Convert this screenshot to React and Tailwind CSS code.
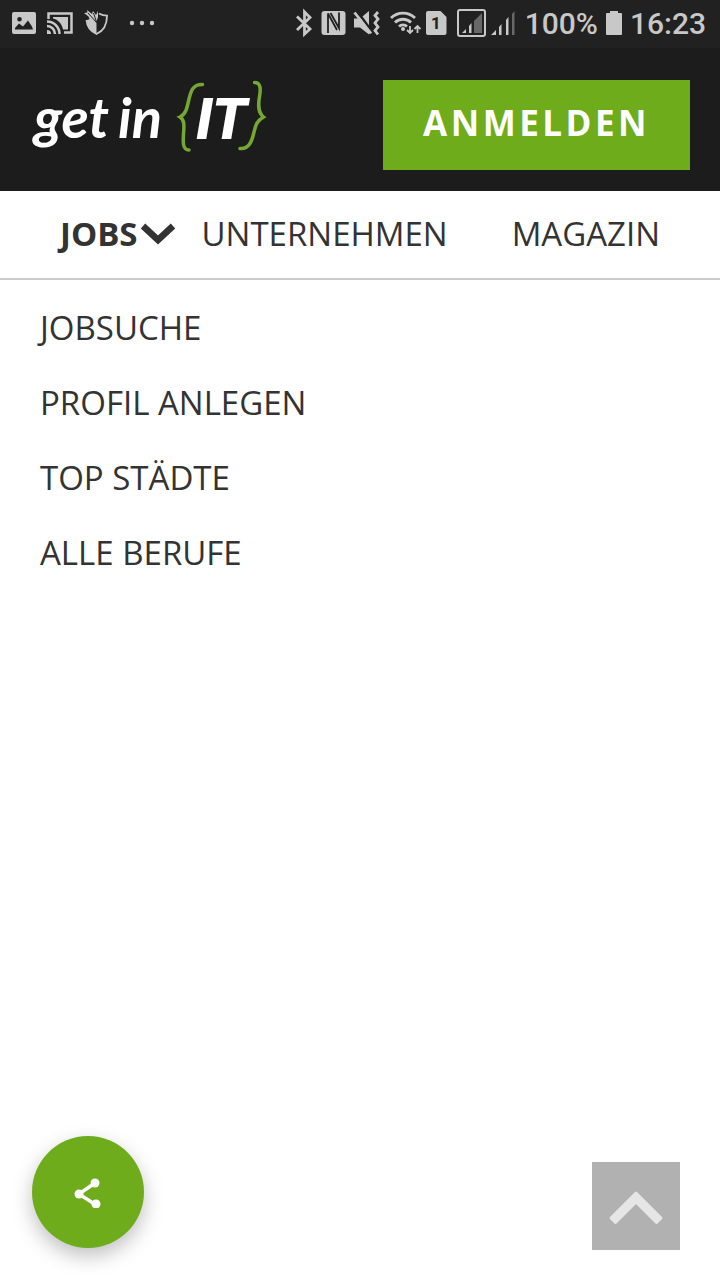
import { useState } from "react";

const navItems = [
  { label: "JOBS", hasMenu: true },
  { label: "UNTERNEHMEN" },
  { label: "MAGAZIN" },
];

const jobLinks = ["JOBSUCHE", "PROFIL ANLEGEN", "TOP STÄDTE", "ALLE BERUFE"];

function StatusBar() {
  return (
    <div className="flex h-12 items-center justify-between bg-[#212121] pr-[14px] pl-3 text-[#c8c8c8]">
      <div className="flex items-center gap-[10px]">
        {/* Picture */}
        <svg width="24" height="48" viewBox="0 0 24 48" fill="currentColor">
          <path fillRule="evenodd" d="M2 12h20a2 2 0 0 1 2 2v18a2 2 0 0 1-2 2H2a2 2 0 0 1-2-2V14a2 2 0 0 1 2-2ZM3 29.500h18l-1-3-4-6-5 6-4-3-4 4.500ZM7.500 17a2.300 2.300 0 1 0 0 4.600 2.300 2.300 0 0 0 0-4.600Z" />
        </svg>
        {/* Cast */}
        <svg width="28" height="48" viewBox="0 0 28 48" fill="none" stroke="currentColor" strokeWidth="2.500">
          <path d="M2.500 19v-5.500h23v19H18" />
          <path d="M7 17h15v12.500h-5C16 24 12 19.500 7 18.500Z" fill="currentColor" stroke="none" />
          <path d="M1 21.500A12.500 12.500 0 0 1 13.500 34M1 26A8 8 0 0 1 9 34" />
          <path d="M1 30a4 4 0 0 1 4 4H1Z" fill="currentColor" stroke="none" />
        </svg>
        {/* Shield */}
        <svg width="26" height="48" viewBox="0 0 26 48" fill="none" stroke="currentColor" strokeWidth="1.800">
          <path d="M15 13.500c3 1.800 5 2.200 8 2.200 0 9-3 15-10.500 18.300C6 31 3 27 2.500 20" />
          <path d="M12.500 23v11C6.500 31 3.500 27 3 20l3-1 6.500 4Z" fill="currentColor" stroke="none" />
          <path d="M0 13l3.500-.5L3 10l5 4 1-3 3 4 2-4v6l-2 6-6-3-1.500-3.500Z" fill="currentColor" stroke="none" />
          <path d="M4 13l8.500 9.500M9.500 13l3 9" stroke="#212121" strokeWidth="1" />
        </svg>
        <svg width="36" height="48" viewBox="0 0 36 48" fill="currentColor">
          <circle cx="12" cy="23" r="2.200" />
          <circle cx="22" cy="23" r="2.200" />
          <circle cx="32" cy="23" r="2.200" />
        </svg>
      </div>

      <div className="flex items-center gap-1 font-[Roboto,sans-serif] text-[30px] leading-none font-medium">
        {/* Bluetooth */}
        <svg width="24" height="48" viewBox="0 0 24 48" fill="none" stroke="currentColor" strokeWidth="2.800">
          <path d="M4 16.500 17 29l-5.500 5V12l5.500 5.500L4 30" />
        </svg>
        {/* NFC */}
        <svg width="28" height="48" viewBox="0 0 28 48">
          <rect x="0.500" y="11" width="24" height="24" rx="3" fill="currentColor" />
          <path d="M7 33V13.500L16 30M9.500 13 18 28V12.500" fill="none" stroke="#212121" strokeWidth="1.800" />
        </svg>
        {/* Muted speaker with vibration */}
        <svg width="32" height="48" viewBox="0 0 32 48" fill="none">
          <path d="M1 18.500h6l9-7.500v23.500L7 27.500H1Z" fill="currentColor" />
          <path d="M4 11 20 33" stroke="#212121" strokeWidth="2.500" />
          <path d="m1.500 12.500 16.500 21" stroke="currentColor" strokeWidth="2.800" />
          <path d="m25 12-3 3.500 3 3.500-3 4 3 4-3 3.500 3 4" stroke="currentColor" strokeWidth="2.800" />
        </svg>
        {/* Wifi */}
        <svg width="32" height="48" viewBox="0 0 32 48" fill="none" stroke="currentColor" strokeWidth="2.800">
          <path d="M2 18a17 17 0 0 1 24 0M6 22.500a11.500 11.500 0 0 1 16 0M10 26.500a6 6 0 0 1 8 0" />
          <circle cx="14" cy="29" r="2" fill="currentColor" stroke="none" />
          <path d="M21 26v7m-3-3 3 3 3-3M28.500 33v-7m-3 3 3-3 3 3" strokeWidth="1.800" />
        </svg>
        {/* SIM 1 */}
        <svg width="28" height="48" viewBox="0 0 28 48">
          <path d="M3 11h12.500l6 6v16a2 2 0 0 1-2 2H3a2 2 0 0 1-2-2V13a2 2 0 0 1 2-2Z" fill="currentColor" />
          <text x="11" y="29" textAnchor="middle" fontSize="17" fontWeight="700" fill="#212121">1</text>
        </svg>
        {/* Signal, both cards */}
        <svg width="30" height="48" viewBox="0 0 30 48">
          <rect x="1" y="10" width="27" height="26" rx="2" fill="none" stroke="currentColor" strokeWidth="2" />
          <path d="M5 33 9 29v4ZM12 26l2.500-3v10H12Z" fill="currentColor" />
          <path d="m17 21 8-8v20h-8Z" fill="#686868" />
        </svg>
        <svg width="30" height="48" viewBox="0 0 30 48" fill="currentColor">
          <path d="m0 35 5-5v5ZM8 27l2.500-3v11H8ZM15 20l2.500-3v18H15Z" />
          <path d="m21 14 2.500-3v24H21Z" fill="#686868" />
        </svg>
        <span>100%</span>
        <svg width="24" height="48" viewBox="0 0 24 48" fill="currentColor">
          <path d="M8 11h8v2h3a1 1 0 0 1 1 1v20a1 1 0 0 1-1 1H5a1 1 0 0 1-1-1V14a1 1 0 0 1 1-1h3Z" />
        </svg>
        <span>16:23</span>
      </div>
    </div>
  );
}

function Logo() {
  return (
    <svg width="240" height="96" viewBox="0 0 240 96" role="img" aria-label="get in {IT}">
      <g fill="#fff" fontStyle="italic">
        <text x="4" y="58" fontFamily="Lato" fontSize="56" fontWeight="700">get</text>
        <text x="88" y="58" fontFamily="Lato" fontSize="56" fontWeight="700">in</text>
        <text x="166" y="59" fontFamily="Roboto" fontSize="57" fontWeight="900">IT</text>
      </g>
      {/* Swung braces */}
      <g fill="none" stroke="#74a832" strokeWidth="3.500" strokeLinecap="round">
        <path d="M172.500 4.500C163 4 161 11 159 19c-2 9-3 15-9 18 5 3 4 10 3.500 17-.5 8-1 16 5.500 16" />
        <path d="M224.500 2.500c6 0 6.500 6 5 14-1.500 9-1.500 16 4 20.500-7 4-8 9-9.500 15-2 9-5 17.500-14 16.500" />
      </g>
    </svg>
  );
}

function Header() {
  return (
    <header className="flex items-start justify-between bg-[#1c1c1c] px-[30px] pt-8 pb-[15px]">
      <a href="#home">
        <Logo />
      </a>
      <button type="button" className="h-[90px] bg-[#6eac1c] px-10 pb-1 text-[35px] font-bold tracking-widest text-white">
        ANMELDEN
      </button>
    </header>
  );
}

function Nav({ open, onToggle }) {
  return (
    <nav className="flex h-[89px] items-center justify-between border-b-2 border-[#ccc] px-[60px] pb-[2px]">
      {navItems.map((item) =>
        item.hasMenu ? (
          <button key={item.label} type="button" aria-expanded={open} onClick={onToggle} className="relative font-bold">
            {item.label}
            <svg className="absolute top-1/2 left-full ml-[2px] -translate-y-1/2" width="36" height="24" viewBox="0 0 36 24" fill="none">
              <path d="m3 4 15 14L33 4" stroke="currentColor" strokeWidth="6.500" />
            </svg>
          </button>
        ) : (
          <a key={item.label} href="#nav">
            {item.label}
          </a>
        )
      )}
    </nav>
  );
}

function App() {
  const [open, setOpen] = useState(true);

  return (
    <div className="min-h-screen bg-white font-['Open_Sans',sans-serif] text-[33px] text-[#333]">
      <StatusBar />
      <Header />
      <Nav open={open} onToggle={() => setOpen(!open)} />

      {open && (
        <ul className="px-10 pt-[10px]">
          {jobLinks.map((label) => (
            <li key={label}>
              <a href="#jobs" className="flex h-[75px] items-center">
                {label}
              </a>
            </li>
          ))}
        </ul>
      )}

      {/* Share */}
      <button
        type="button"
        aria-label="Teilen"
        className="fixed bottom-8 left-8 flex size-28 items-center justify-center rounded-full bg-[#6eac1c] text-white shadow-[0_8px_20px_rgba(0,0,0,0.25)]"
      >
        <svg width="28" height="32" viewBox="0 0 28 32" fill="currentColor">
          <path d="M21 7 5 18l17 11" fill="none" stroke="currentColor" strokeWidth="3.500" />
          <circle cx="21" cy="7" r="4.500" />
          <circle cx="5" cy="18" r="4.500" />
          <circle cx="22" cy="28" r="4.500" />
        </svg>
      </button>

      {/* Back to top */}
      <button
        type="button"
        aria-label="Nach oben"
        className="fixed right-10 bottom-[30px] flex size-[88px] items-center justify-center bg-[#b1b1b1]"
      >
        <svg width="56" height="40" viewBox="0 0 56 40" fill="#e6e6e6" stroke="#e6e6e6">
          <path d="M28 7 53 32l-4.500 4.500L28 16 7.500 36.500 3 32Z" strokeWidth="3" strokeLinejoin="round" />
        </svg>
      </button>
    </div>
  );
}

export default App;
